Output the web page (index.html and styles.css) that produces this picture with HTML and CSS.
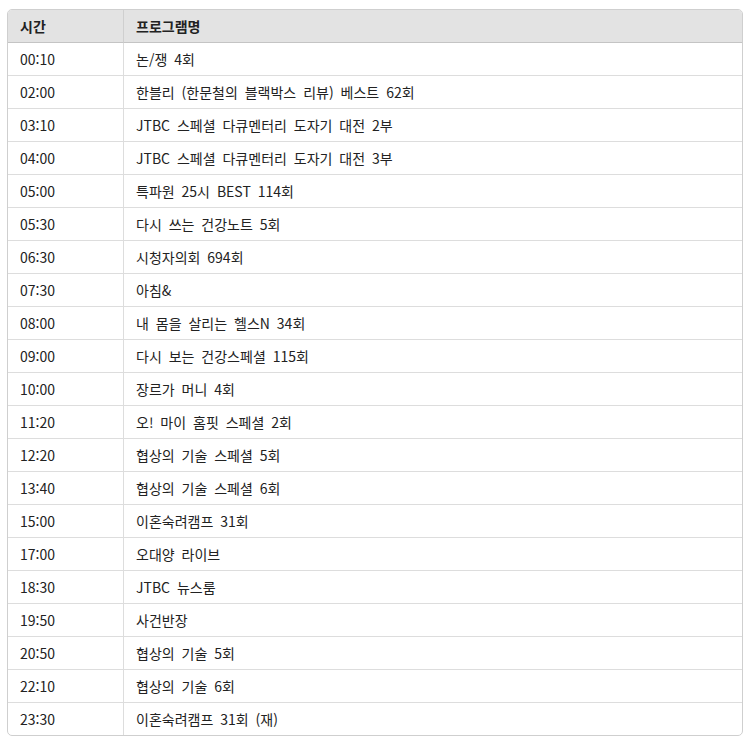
FILE: index.html
```html
<!DOCTYPE html>
<html lang="ko">
<head>
<meta charset="utf-8">
<link rel="stylesheet" href="styles.css">
</head>
<body>
<div class="wrap">
<table class="sched">
<thead>
<tr><th class="c-time">시간</th><th>프로그램명</th></tr>
</thead>
<tbody>
<tr><td class="c-time">00:10</td><td>논/쟁 4회</td></tr>
<tr><td class="c-time">02:00</td><td>한블리 (한문철의 블랙박스 리뷰) 베스트 62회</td></tr>
<tr><td class="c-time">03:10</td><td>JTBC 스페셜 다큐멘터리 도자기 대전 2부</td></tr>
<tr><td class="c-time">04:00</td><td>JTBC 스페셜 다큐멘터리 도자기 대전 3부</td></tr>
<tr><td class="c-time">05:00</td><td>특파원 25시 BEST 114회</td></tr>
<tr><td class="c-time">05:30</td><td>다시 쓰는 건강노트 5회</td></tr>
<tr><td class="c-time">06:30</td><td>시청자의회 694회</td></tr>
<tr><td class="c-time">07:30</td><td>아침&amp;</td></tr>
<tr><td class="c-time">08:00</td><td>내 몸을 살리는 헬스N 34회</td></tr>
<tr><td class="c-time">09:00</td><td>다시 보는 건강스페셜 115회</td></tr>
<tr><td class="c-time">10:00</td><td>장르가 머니 4회</td></tr>
<tr><td class="c-time">11:20</td><td>오! 마이 홈핏 스페셜 2회</td></tr>
<tr><td class="c-time">12:20</td><td>협상의 기술 스페셜 5회</td></tr>
<tr><td class="c-time">13:40</td><td>협상의 기술 스페셜 6회</td></tr>
<tr><td class="c-time">15:00</td><td>이혼숙려캠프 31회</td></tr>
<tr><td class="c-time">17:00</td><td>오대양 라이브</td></tr>
<tr><td class="c-time">18:30</td><td>JTBC 뉴스룸</td></tr>
<tr><td class="c-time">19:50</td><td>사건반장</td></tr>
<tr><td class="c-time">20:50</td><td>협상의 기술 5회</td></tr>
<tr><td class="c-time">22:10</td><td>협상의 기술 6회</td></tr>
<tr><td class="c-time">23:30</td><td>이혼숙려캠프 31회 (재)</td></tr>
</tbody>
</table>
</div>
</body>
</html>
```
FILE: styles.css
```css
html, body {
  margin: 0;
  padding: 0;
  background: #ffffff;
}
.wrap {
  padding: 9px 8px 0 7px;
}
.sched {
  width: 736px;
  border-collapse: separate;
  border-spacing: 0;
  border: 1px solid #cfcfcf;
  border-radius: 5px;
  overflow: hidden;
  font-family: "Noto Sans CJK KR", "Noto Sans", sans-serif;
  font-size: 14px;
  word-spacing: 3px;
  color: #222222;
}
.sched th,
.sched td {
  text-align: left;
  padding: 6px 12px 6px 12px;
  line-height: 20px;
  height: 20px;
  border-bottom: 1px solid #dddddd;
  vertical-align: middle;
}
.sched th {
  background: #e3e3e3;
  font-weight: 700;
  border-bottom: 1px solid #c4c4c4;
}
.sched tbody tr:last-child td {
  border-bottom: none;
}
.sched .c-time {
  width: 91px;
  border-right: 1px solid #dddddd;
}
.sched th.c-time {
  border-right-color: #cfcfcf;
}
```
